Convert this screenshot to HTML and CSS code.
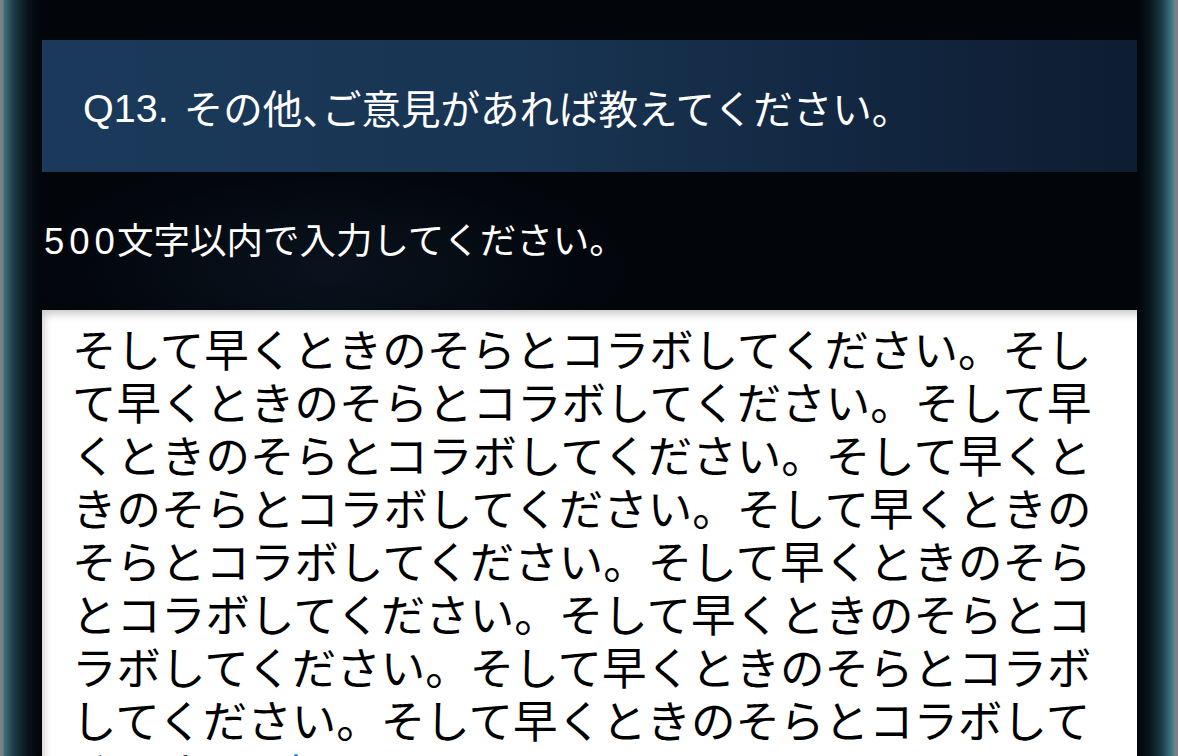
FILE: index.html
```html
<!DOCTYPE html>
<html lang="ja">
<head>
    <meta charset="UTF-8">
    <meta name="viewport" content="width=device-width, initial-scale=1.0">
    <title>アンケート Q13</title>
    <link rel="stylesheet" href="styles.css">
</head>
<body>
    <div class="screen">
        <div class="panel">
            <h2 class="question"><span class="qno">Q13.</span>その他<span class="comma">、</span>ご意見があれば教えてください。</h2>
            <p class="hint"><span class="num">500</span>文字以内で入力してください。</p>
            <div class="answer">そして早くときのそらとコラボしてください。そして早くときのそらとコラボしてください。そして早くときのそらとコラボしてください。そして早くときのそらとコラボしてください。そして早くときのそらとコラボしてください。そして早くときのそらとコラボしてください。そして早くときのそらとコラボしてください。そして早くときのそらとコラボしてください。そして早くときのそらとコラボしてください。<span class="caret"></span></div>
        </div>
    </div>
</body>
</html>
```

FILE: styles.css
```css
html, body {
    margin: 0;
    padding: 0;
    height: 100%;
    overflow: hidden;
    background: #000;
    font-family: "Liberation Sans", "Noto Sans CJK JP", sans-serif;
}

/* dark screen with the teal bezel glow on both sides */
.screen {
    height: 756px;
    padding: 40px 41px 0 42px;
    box-sizing: border-box;
    background:
        radial-gradient(ellipse 420px 160px at 330px 270px, rgba(30, 60, 90, 0.25), transparent 70%),
        linear-gradient(to right,
            #7d8083 0px, #7d8083 3px,
            #3d6f7c 4px, #1c3a44 14px, #071319 28px, #02050a 40px,
            #02050a 1138px, #08161c 1150px, #1d3d46 1162px, #44808b 1173px,
            #7d8083 1175px, #7d8083 1178px);
}

.panel {
    display: flex;
    flex-direction: column;
}

.question {
    margin: 0;
    height: 132px;
    display: flex;
    align-items: center;
    padding-left: 41px;
    background: linear-gradient(to right, #1b3a5b 0%, #183452 45%, #10223a 85%, #0e1d31 100%);
    color: #fff;
    font-size: 39.5px;
    font-weight: normal;
}

.qno {
    margin-right: 15px;
    position: relative;
    top: 2px;
}

/* narrow touten like the system font */
.comma {
    letter-spacing: -0.5em;
}

.hint {
    margin: 49px 0 47px 2px;
    color: #fff;
    font-size: 36.5px;
    line-height: 42px;
}

.num {
    letter-spacing: 5px;
    margin-right: -3px;
}

.answer {
    height: 460px;
    padding: 11px 39px 0 30px;
    background: #fff;
    box-shadow: inset 6px 8px 8px -4px rgba(0, 0, 0, 0.22);
    color: #000;
    font-family: "Noto Sans CJK JP", sans-serif;
    font-size: 44.5px;
    line-height: 53px;
    word-break: break-all;
}

.caret {
    display: inline-block;
    width: 4px;
    height: 46px;
    margin-left: -1px;
    border-radius: 2px;
    background: #1a84f6;
    vertical-align: -9px;
}
```
